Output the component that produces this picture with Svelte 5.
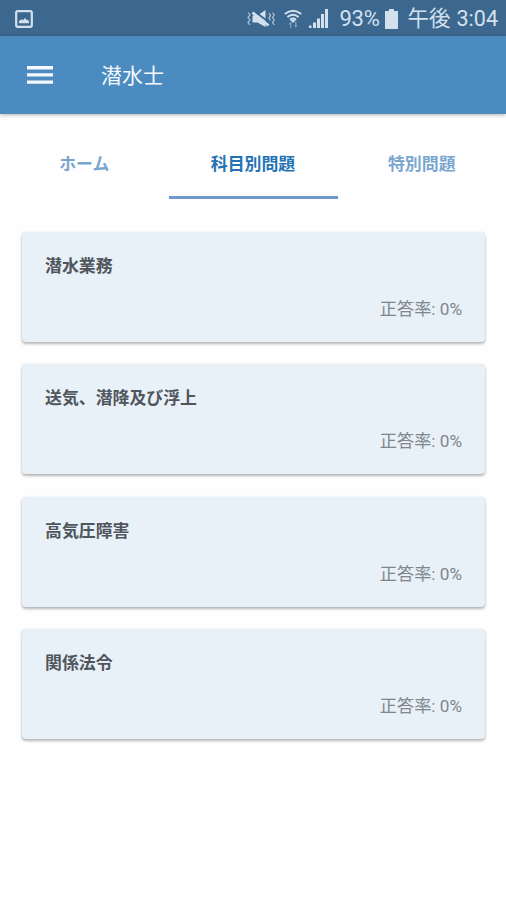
<script lang="ts">
	type Tab = { id: string; label: string };
	type Subject = { name: string; rate: number };

	const tabs: Tab[] = [
		{ id: 'home', label: 'ホーム' },
		{ id: 'subject', label: '科目別問題' },
		{ id: 'special', label: '特別問題' }
	];

	const subjects: Subject[] = [
		{ name: '潜水業務', rate: 0 },
		{ name: '送気、潜降及び浮上', rate: 0 },
		{ name: '高気圧障害', rate: 0 },
		{ name: '関係法令', rate: 0 }
	];

	let active = $state('subject');
</script>

<div class="screen">
	<div class="status">
		<svg class="picture" width="18" height="18" viewBox="0 0 18 18">
			<rect x="1.2" y="1.2" width="15.6" height="15.6" rx="1.5" fill="none" stroke="currentColor" stroke-width="2.2" />
			<path d="M4 13.300v-2l2.500-2 1.500 1L10 8l1.500 2 1-.5 1.500 2v1.800z" fill="currentColor" />
		</svg>
		<div class="indicators">
			<svg class="mute" width="28" height="20" viewBox="0 0 28 20">
				<path d="M5.500 6.500h5l8-5.500v17l-8-4.500h-5z" fill="currentColor" />
				<path d="M7 2l16 12" stroke="#3c678f" stroke-width="2" />
				<path d="M5.500 3.500l16 13" stroke="currentColor" stroke-width="2.800" />
				<path d="M1 3.500L3 6 1 8.500 3 11l-2 2.500L3 16M25.500 3.500L27.300 6l-1.800 2.500 1.800 2.500-1.800 2.500 1.800 2.500M22 4l1.500 2.500L22 9l1.500 2.500" fill="none" stroke="currentColor" stroke-width="1.200" opacity=".8" />
			</svg>
			<svg class="wifi" width="18" height="20" viewBox="0 0 18 20">
				<path d="M.8 5q8.200-6.600 16.400 0M3.400 8q5.600-4.500 11.200 0M6 10.700q3-2.400 6 0" fill="none" stroke="currentColor" stroke-width="2" />
				<path d="M6.500 11.200L9 14l2.500-2.800q-2.500-1.600-5 0z" fill="currentColor" />
				<path d="M4.500 15.500L6.800 12.500 8 15.500H7.300V19H6v-3.500zM10 16h1v-3.500h1.400V16h1.200l-1.900 3z" fill="currentColor" opacity=".45" />
			</svg>
			<svg class="signal" width="20" height="19" viewBox="0 0 20 19">
				<path d="M0 16.500h2.500V19H0zM4 13.500h3V19H4zM8 9.500h3V19H8zM12 5h3v14h-3zM16 0h3v19h-3z" fill="currentColor" />
			</svg>
			<span class="percent">93%</span>
			<svg class="battery" width="13" height="20" viewBox="0 0 13 20">
				<path d="M4 0h5v2h4v18H0V2h4z" fill="currentColor" />
			</svg>
			<span class="clock"><span>午後</span><span>3:04</span></span>
		</div>
	</div>

	<header>
		<button class="menu" aria-label="メニュー">
			<svg width="26" height="18" viewBox="0 0 26 18">
				<path d="M0 0h26v3.400H0zM0 7.200h26v3.400H0zM0 14.400h26v3.400H0z" fill="currentColor" />
			</svg>
		</button>
		<h1>潜水士</h1>
	</header>

	<nav>
		{#each tabs as tab}
			<button class="tab" class:active={tab.id === active} onclick={() => (active = tab.id)}>{tab.label}</button>
		{/each}
	</nav>

	<main>
		{#each subjects as subject}
			<section class="card">
				<h2>{subject.name}</h2>
				<p>正答率: {subject.rate}%</p>
			</section>
		{/each}
	</main>
</div>

<style>
	:global(body) {
		background: #fff;
	}

	.screen {
		height: 900px;
		overflow: hidden;
		background: #fefefe;
		font-family: Roboto, "Noto Sans CJK JP", sans-serif;
	}

	.status {
		display: flex;
		align-items: center;
		justify-content: space-between;
		box-sizing: border-box;
		height: 36px;
		padding: 1px 8px 0 15px;
		background: #3c678f;
		color: #d3e1ee;
	}

	.indicators {
		display: flex;
		align-items: center;
		height: 35px;
		font-size: 22px;
		line-height: 36px;
		white-space: nowrap;
	}

	.wifi {
		margin-left: 9px;
	}

	.signal {
		margin-left: 7px;
	}

	.percent {
		width: 41px;
		margin-left: 11px;
		letter-spacing: -0.3px;
	}

	.battery {
		margin-left: 4px;
	}

	.clock {
		display: flex;
		gap: 6px;
		margin-left: 10px;
		font-size: 21.5px;
	}

	header {
		display: flex;
		align-items: center;
		position: relative;
		height: 78px;
		padding-left: 27px;
		background: #4b8bc0;
		color: #f4f9fe;
		box-shadow: 0 1px 4px rgba(0, 0, 0, 0.3);
	}

	button {
		padding: 0;
		border: 0;
		background: none;
		font: inherit;
		color: inherit;
		cursor: pointer;
	}

	.menu {
		display: flex;
	}

	h1 {
		margin: 2px 0 0 48px;
		font-size: 21px;
		font-weight: 400;
		line-height: 30px;
	}

	nav {
		display: grid;
		grid-template-columns: 1fr 169px 1fr;
		height: 85px;
	}

	.tab {
		box-sizing: border-box;
		padding-top: 14px;
		border-bottom: 3px solid transparent;
		color: #79a6d0;
		font-size: 16.9px;
		font-weight: 700;
	}

	.tab.active {
		border-color: #6f98c8;
		color: #2273b5;
	}

	main {
		display: flex;
		flex-direction: column;
		gap: 22.3px;
		padding: 33px 21px 0 22px;
	}

	.card {
		box-sizing: border-box;
		height: 110px;
		padding: 21px 23px;
		border-radius: 4px;
		background: #e8f0f8;
		box-shadow: 0 2px 3px rgba(0, 0, 0, 0.28), 0 0 2px rgba(0, 0, 0, 0.1);
	}

	h2 {
		margin: 0;
		color: #50565c;
		font-size: 16.9px;
		font-weight: 700;
		line-height: 26px;
	}

	p {
		margin: 17px 0 0;
		color: #80868c;
		font-size: 17.2px;
		line-height: 26px;
		text-align: right;
	}
</style>
